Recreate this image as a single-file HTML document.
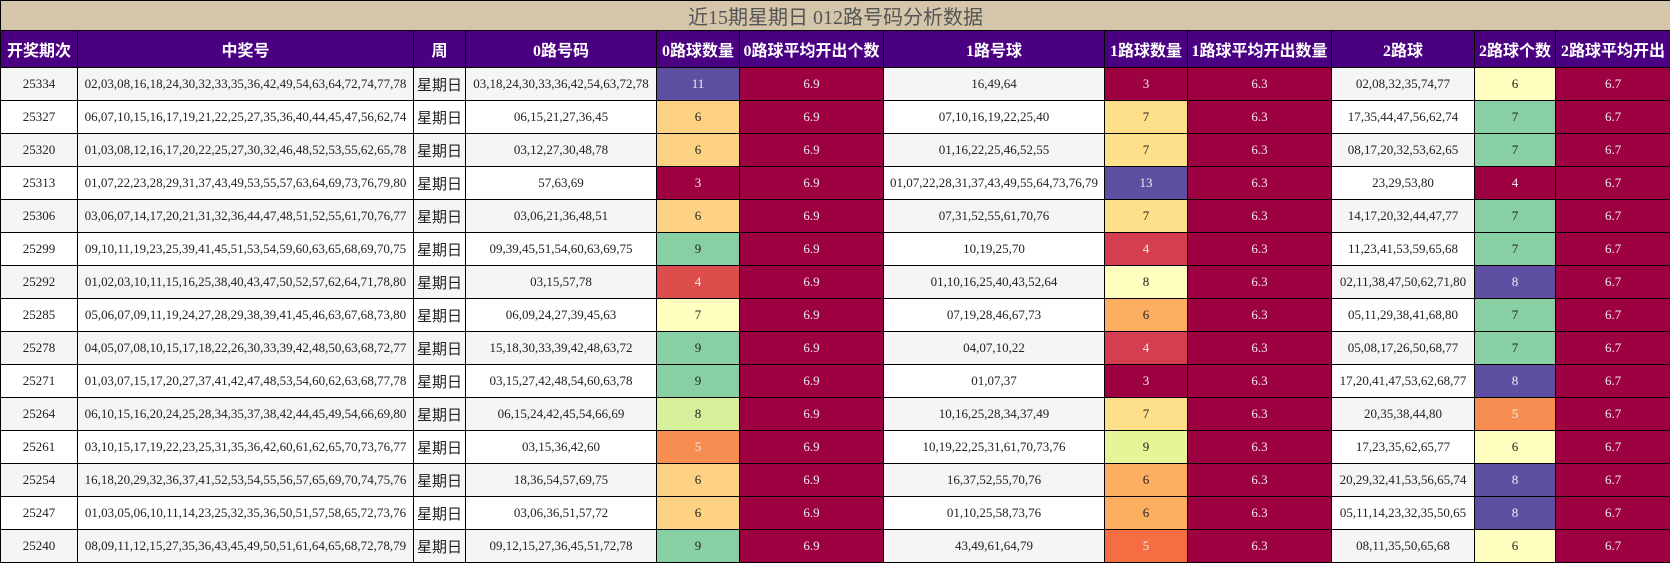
<!DOCTYPE html>
<html><head><meta charset="utf-8"><style>
body{margin:0;background:#fff;}
table{border-collapse:collapse;table-layout:fixed;width:1670px;font-family:"Liberation Serif","Noto Sans CJK SC",serif;}
td,th{border:1px solid #000;text-align:center;padding:0;overflow:hidden;white-space:nowrap;}
.t{height:26px;background:#d5c6ab;color:#555;font-size:20px;font-weight:normal;}
th{background:#4b0082;color:#fff;font-size:16px;height:36px;font-weight:bold;}
td{height:32px;font-size:13px;color:#222;}
tr.g td{background:#f5f5f5;}
tr td.m{background:#9e0142;color:#eee;}
tr td.b{background:#5e4fa2;color:#eee;}
tr td.o6{background:#fdd383;}
tr td.y{background:#fee08b;}
tr td.ly{background:#ffffbf;}
tr td.gr{background:#88d0a4;}
tr td.r0{background:#dc4d4b;color:#eee;}
tr td.r1{background:#d53e4f;color:#eee;}
tr td.lg{background:#d8ef9b;}
tr td.lg2{background:#e6f598;}
tr td.or{background:#f88d52;color:#eee;}
tr td.or1{background:#f46d43;color:#eee;}
tr td.pk{background:#fdae61;}
.z{font-family:"Noto Sans CJK SC",sans-serif;font-size:15px;}
</style></head><body>
<table>
<colgroup><col style="width:77px"><col style="width:336px"><col style="width:52px"><col style="width:191px"><col style="width:83px"><col style="width:144px"><col style="width:221px"><col style="width:83px"><col style="width:144px"><col style="width:143px"><col style="width:81px"><col style="width:115px"></colgroup>
<tr><th colspan="12" class="t">近15期星期日 012路号码分析数据</th></tr>
<tr><th>开奖期次</th><th>中奖号</th><th>周</th><th>0路号码</th><th>0路球数量</th><th>0路球平均开出个数</th><th>1路号球</th><th>1路球数量</th><th>1路球平均开出数量</th><th>2路球</th><th>2路球个数</th><th>2路球平均开出</th></tr>
<tr class="g"><td>25334</td><td>02,03,08,16,18,24,30,32,33,35,36,42,49,54,63,64,72,74,77,78</td><td class="z">星期日</td><td>03,18,24,30,33,36,42,54,63,72,78</td><td class="b">11</td><td class="m">6.9</td><td>16,49,64</td><td class="m">3</td><td class="m">6.3</td><td>02,08,32,35,74,77</td><td class="ly">6</td><td class="m">6.7</td></tr>
<tr><td>25327</td><td>06,07,10,15,16,17,19,21,22,25,27,35,36,40,44,45,47,56,62,74</td><td class="z">星期日</td><td>06,15,21,27,36,45</td><td class="o6">6</td><td class="m">6.9</td><td>07,10,16,19,22,25,40</td><td class="y">7</td><td class="m">6.3</td><td>17,35,44,47,56,62,74</td><td class="gr">7</td><td class="m">6.7</td></tr>
<tr class="g"><td>25320</td><td>01,03,08,12,16,17,20,22,25,27,30,32,46,48,52,53,55,62,65,78</td><td class="z">星期日</td><td>03,12,27,30,48,78</td><td class="o6">6</td><td class="m">6.9</td><td>01,16,22,25,46,52,55</td><td class="y">7</td><td class="m">6.3</td><td>08,17,20,32,53,62,65</td><td class="gr">7</td><td class="m">6.7</td></tr>
<tr><td>25313</td><td>01,07,22,23,28,29,31,37,43,49,53,55,57,63,64,69,73,76,79,80</td><td class="z">星期日</td><td>57,63,69</td><td class="m">3</td><td class="m">6.9</td><td>01,07,22,28,31,37,43,49,55,64,73,76,79</td><td class="b">13</td><td class="m">6.3</td><td>23,29,53,80</td><td class="m">4</td><td class="m">6.7</td></tr>
<tr class="g"><td>25306</td><td>03,06,07,14,17,20,21,31,32,36,44,47,48,51,52,55,61,70,76,77</td><td class="z">星期日</td><td>03,06,21,36,48,51</td><td class="o6">6</td><td class="m">6.9</td><td>07,31,52,55,61,70,76</td><td class="y">7</td><td class="m">6.3</td><td>14,17,20,32,44,47,77</td><td class="gr">7</td><td class="m">6.7</td></tr>
<tr><td>25299</td><td>09,10,11,19,23,25,39,41,45,51,53,54,59,60,63,65,68,69,70,75</td><td class="z">星期日</td><td>09,39,45,51,54,60,63,69,75</td><td class="gr">9</td><td class="m">6.9</td><td>10,19,25,70</td><td class="r1">4</td><td class="m">6.3</td><td>11,23,41,53,59,65,68</td><td class="gr">7</td><td class="m">6.7</td></tr>
<tr class="g"><td>25292</td><td>01,02,03,10,11,15,16,25,38,40,43,47,50,52,57,62,64,71,78,80</td><td class="z">星期日</td><td>03,15,57,78</td><td class="r0">4</td><td class="m">6.9</td><td>01,10,16,25,40,43,52,64</td><td class="ly">8</td><td class="m">6.3</td><td>02,11,38,47,50,62,71,80</td><td class="b">8</td><td class="m">6.7</td></tr>
<tr><td>25285</td><td>05,06,07,09,11,19,24,27,28,29,38,39,41,45,46,63,67,68,73,80</td><td class="z">星期日</td><td>06,09,24,27,39,45,63</td><td class="ly">7</td><td class="m">6.9</td><td>07,19,28,46,67,73</td><td class="pk">6</td><td class="m">6.3</td><td>05,11,29,38,41,68,80</td><td class="gr">7</td><td class="m">6.7</td></tr>
<tr class="g"><td>25278</td><td>04,05,07,08,10,15,17,18,22,26,30,33,39,42,48,50,63,68,72,77</td><td class="z">星期日</td><td>15,18,30,33,39,42,48,63,72</td><td class="gr">9</td><td class="m">6.9</td><td>04,07,10,22</td><td class="r1">4</td><td class="m">6.3</td><td>05,08,17,26,50,68,77</td><td class="gr">7</td><td class="m">6.7</td></tr>
<tr><td>25271</td><td>01,03,07,15,17,20,27,37,41,42,47,48,53,54,60,62,63,68,77,78</td><td class="z">星期日</td><td>03,15,27,42,48,54,60,63,78</td><td class="gr">9</td><td class="m">6.9</td><td>01,07,37</td><td class="m">3</td><td class="m">6.3</td><td>17,20,41,47,53,62,68,77</td><td class="b">8</td><td class="m">6.7</td></tr>
<tr class="g"><td>25264</td><td>06,10,15,16,20,24,25,28,34,35,37,38,42,44,45,49,54,66,69,80</td><td class="z">星期日</td><td>06,15,24,42,45,54,66,69</td><td class="lg">8</td><td class="m">6.9</td><td>10,16,25,28,34,37,49</td><td class="y">7</td><td class="m">6.3</td><td>20,35,38,44,80</td><td class="or">5</td><td class="m">6.7</td></tr>
<tr><td>25261</td><td>03,10,15,17,19,22,23,25,31,35,36,42,60,61,62,65,70,73,76,77</td><td class="z">星期日</td><td>03,15,36,42,60</td><td class="or">5</td><td class="m">6.9</td><td>10,19,22,25,31,61,70,73,76</td><td class="lg2">9</td><td class="m">6.3</td><td>17,23,35,62,65,77</td><td class="ly">6</td><td class="m">6.7</td></tr>
<tr class="g"><td>25254</td><td>16,18,20,29,32,36,37,41,52,53,54,55,56,57,65,69,70,74,75,76</td><td class="z">星期日</td><td>18,36,54,57,69,75</td><td class="o6">6</td><td class="m">6.9</td><td>16,37,52,55,70,76</td><td class="pk">6</td><td class="m">6.3</td><td>20,29,32,41,53,56,65,74</td><td class="b">8</td><td class="m">6.7</td></tr>
<tr><td>25247</td><td>01,03,05,06,10,11,14,23,25,32,35,36,50,51,57,58,65,72,73,76</td><td class="z">星期日</td><td>03,06,36,51,57,72</td><td class="o6">6</td><td class="m">6.9</td><td>01,10,25,58,73,76</td><td class="pk">6</td><td class="m">6.3</td><td>05,11,14,23,32,35,50,65</td><td class="b">8</td><td class="m">6.7</td></tr>
<tr class="g"><td>25240</td><td>08,09,11,12,15,27,35,36,43,45,49,50,51,61,64,65,68,72,78,79</td><td class="z">星期日</td><td>09,12,15,27,36,45,51,72,78</td><td class="gr">9</td><td class="m">6.9</td><td>43,49,61,64,79</td><td class="or1">5</td><td class="m">6.3</td><td>08,11,35,50,65,68</td><td class="ly">6</td><td class="m">6.7</td></tr>
</table>
</body></html>
